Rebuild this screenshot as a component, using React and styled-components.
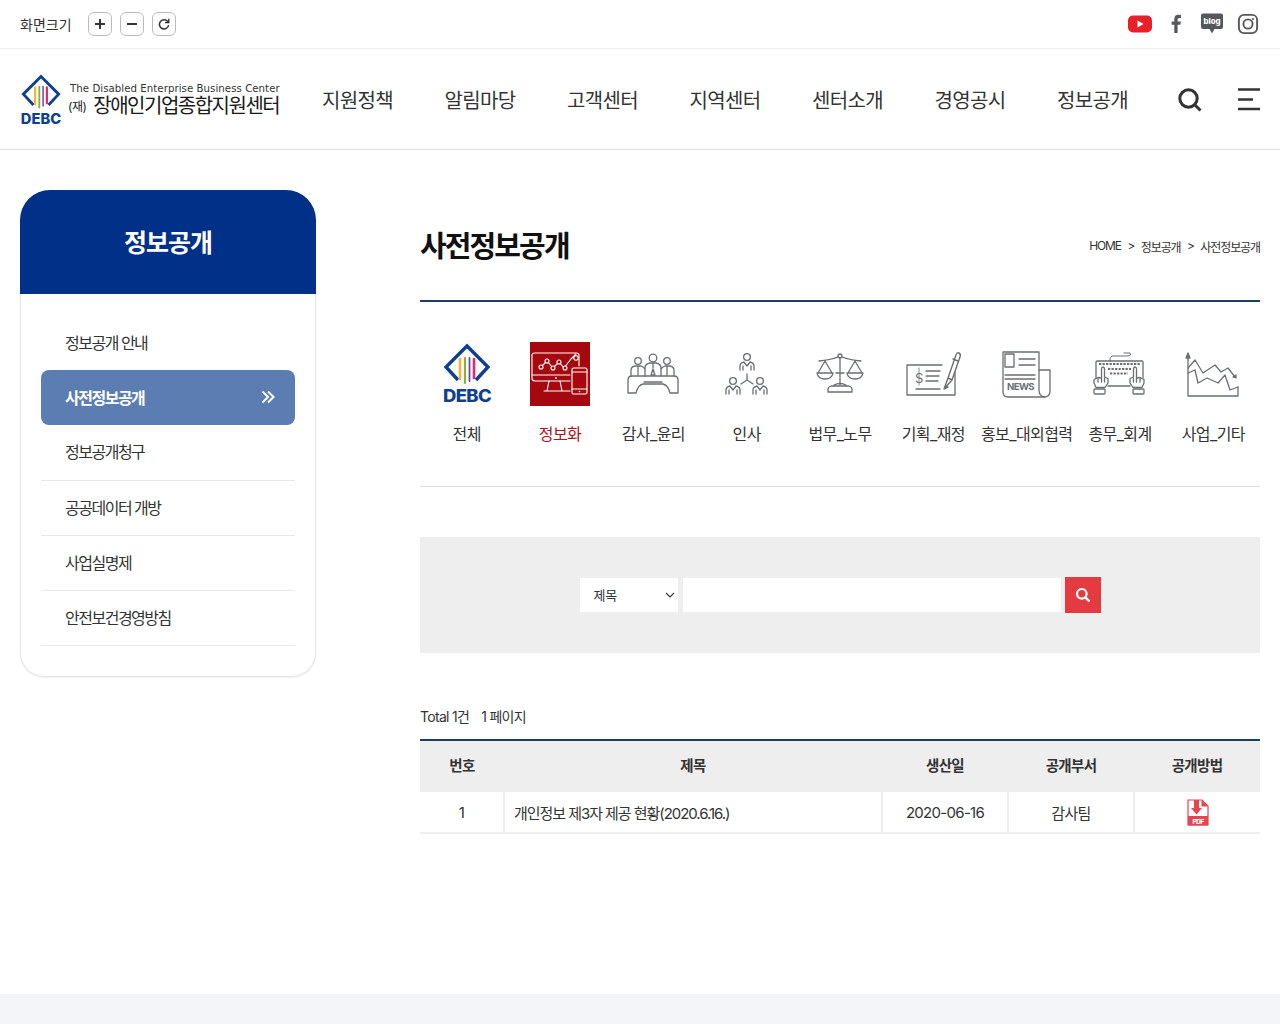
import React from "react";
import styled, { createGlobalStyle } from "styled-components";

const Global = createGlobalStyle`
  * { box-sizing: border-box; }
  html, body { margin: 0; padding: 0; background: #fff; }
  body { font-family: Inter, "Noto Sans CJK KR", sans-serif; color: #333; }
`;
const Page = styled.div`width: 1280px; min-height: 1024px; display: flex; flex-direction: column;`;
const TopBar = styled.div`height: 49px; border-bottom: 1px solid #f0f0f0; display: flex; align-items: center; justify-content: space-between; padding: 0 20px;`;
const ZoomGroup = styled.div`display: flex; align-items: center; gap: 8px;`;
const ZoomLabel = styled.span`font-size: 14px; color: #333; margin-right: 8px; letter-spacing: 0;`;
const ZoomBtn = styled.button`width: 24px; height: 24px; padding: 0; border: 1px solid #bbb; border-radius: 6px; background: #fff; display: flex; align-items: center; justify-content: center; color: #333;`;
const Socials = styled.div`display: flex; align-items: center; gap: 12px;`;
const Header = styled.header`height: 101px; border-bottom: 1px solid #ddd; display: flex; align-items: center; padding: 0 20px;`;
const Logo = styled.a`width: 261px; display: flex; align-items: center; flex: none; margin-top: 1px; svg { flex: none; }`;
const LogoText = styled.div`display: flex; flex-direction: column; padding-top: 1px; margin-left: 6px;`;
const LogoEn = styled.span`font-family: "DejaVu Sans", sans-serif; font-size: 10.2px; line-height: 12px; color: #333; letter-spacing: 0.05px; margin-left: 2px; white-space: nowrap;`;
const LogoKo = styled.span`font-size: 20px; line-height: 22px; color: #1a1a1a; letter-spacing: -1.5px; white-space: nowrap;`;
const LogoJae = styled.span`font-size: 12px; letter-spacing: -0.5px; margin-right: 7px; vertical-align: 2px;`;
const Nav = styled.nav`display: flex; justify-content: space-between; width: 807px; margin-left: 41px; padding-top: 3px;`;
const NavItem = styled.a`font-size: 20px; line-height: 28px; color: #333; letter-spacing: -0.65px; white-space: nowrap;`;
const HeaderTools = styled.div`display: flex; align-items: center; margin-left: 50px; gap: 36px; padding-top: 1px;`;
const Main = styled.main`display: flex; align-items: flex-start; padding: 40px 20px 160px;`;
const Side = styled.aside`width: 296px; flex: none;`;
const SideHead = styled.div`height: 104px; background: #003087; border-radius: 30px 30px 0 0; color: #fff; display: flex; align-items: center; justify-content: center; font-size: 25px; font-weight: 700; letter-spacing: -1px; padding-bottom: 2px;`;
const SideBody = styled.ul`list-style: none; margin: 0; padding: 21px 20px 0; height: 383px; border: 1px solid #e4e4e4; border-top: 0; border-radius: 0 0 24px 24px; box-shadow: 0 1px 2px rgba(0,0,0,.06);`;
const SideItem = styled.li`
  height: 55.2px; display: flex; align-items: center; justify-content: space-between; padding: 0 20px 2px 24px;
  font-size: 16px; letter-spacing: -1.5px; white-space: nowrap;
  color: ${p => (p.$active ? "#fff" : "#333")};
  font-weight: ${p => (p.$active ? 700 : 400)};
  background: ${p => (p.$active ? "#5b7db1" : "transparent")};
  border-radius: ${p => (p.$active ? "8px" : "0")};
  border-bottom: ${p => (p.$line ? "1px solid #e9e9e9" : "0")};
`;
const Content = styled.section`width: 840px; margin-left: 104px;`;
const TitleRow = styled.div`height: 112px; border-bottom: 2px solid #1c3f5e; display: flex; align-items: center; justify-content: space-between; padding-top: 3px;`;
const Title = styled.h2`margin: 0; font-size: 29px; line-height: 36px; font-weight: 700; color: #111; letter-spacing: -1.9px;`;
const Crumbs = styled.div`display: flex; gap: 6.5px; font-size: 12px; color: #333; letter-spacing: -1.1px;`;
const CatGrid = styled.ul`list-style: none; margin: 0; padding: 40px 0 0; height: 185px; border-bottom: 1px solid #ddd; display: grid; grid-template-columns: repeat(9, 1fr); align-content: start;`;
const CatItem = styled.li`display: flex; flex-direction: column; align-items: center; font-size: 16px; line-height: 24px; letter-spacing: -0.6px; white-space: nowrap; color: ${p => (p.$active ? "#b01020" : "#333")};`;
const CatIcon = styled.div`width: 60px; height: 64px; margin-bottom: 16px; display: flex; align-items: center; justify-content: center;`;
const SearchPanel = styled.div`margin-top: 50px; height: 116px; background: #eee; display: flex; align-items: center; justify-content: center; gap: 4px;`;
const SelectBox = styled.div`width: 98px; height: 34px; margin-right: 1px; background: #fff; display: flex; align-items: center; justify-content: space-between; padding: 0 2px 1px 14px; font-size: 13px; letter-spacing: -0.3px; color: #333;`;
const SearchInput = styled.input`width: 378px; height: 34px; border: 0; background: #fff; padding: 0 10px; outline: none;`;
const SearchBtn = styled.button`width: 36px; height: 36px; padding: 0; border: 0; background: #e53a3f; display: flex; align-items: center; justify-content: center;`;
const Total = styled.div`margin-top: 54px; height: 20px; display: flex; gap: 12px; font-size: 14px; line-height: 20px; color: #333; letter-spacing: -0.7px;`;
const Table = styled.table`width: 840px; margin-top: 12px; border-collapse: collapse; table-layout: fixed; border-top: 2px solid #1c3f5e; border-bottom: 2px solid #eee;`;
const Th = styled.th`height: 52px; background: #eee; font-size: 14.5px; font-weight: 700; color: #333; letter-spacing: -0.7px; padding: 0 0 4px;`;
const Td = styled.td`height: 41px; padding: 0 ${p => (p.$left ? "9px" : "0")}; font-size: 15px; color: #333; letter-spacing: ${p => (p.$left ? "-1.05px" : "-0.7px")}; text-align: ${p => (p.$left ? "left" : "center")}; border-left: ${p => (p.$first ? "0" : "2px solid #eee")};`;
const PdfWrap = styled.span`display: inline-flex; vertical-align: middle; margin-top: 1px;`;
const Footer = styled.footer`height: 30px; background: #f4f5f9;`;

const Debc = ({ w = 50, h = 62 }) => (
  <svg width={w} height={h} viewBox="0 0 50 62">
    <path d="M16 37 L4 24 L25 3 L46 24 L34 37" fill="none" stroke="#0f3f8f" strokeWidth="3.4" />
    <path d="M18 16 V36" stroke="#f0b73a" strokeWidth="2.6" strokeLinecap="round" />
    <path d="M23 15 V40" stroke="#8fae3c" strokeWidth="2.2" strokeLinecap="round" />
    <path d="M27.5 15 V38" stroke="#6b4aa0" strokeWidth="1.8" strokeLinecap="round" />
    <path d="M32 16 V35" stroke="#e0267f" strokeWidth="2.6" strokeLinecap="round" />
    <text x="25" y="59" textAnchor="middle" textLength="48" lengthAdjust="spacingAndGlyphs" fontFamily="Inter, sans-serif" fontWeight="800" fontSize="17" fill="#0f3f8f">DEBC</text>
  </svg>
);

const g = { fill: "none", stroke: "#6b6f73", strokeWidth: 1.3, strokeLinecap: "round", strokeLinejoin: "round" };

const IconInfo = () => (
  <svg width="60" height="64" viewBox="0 0 60 64">
    <rect width="60" height="64" fill="#a5090f" />
    <g fill="none" stroke="#fff" strokeWidth="1.1" strokeLinecap="round" strokeLinejoin="round">
      <path d="M40 39 H5 Q2 39 2 36 V13 Q2 11 5 11 H46 Q49 11 49 13 V24" />
      <path d="M2 33 H40" />
      <path d="M19 39 L17 49 H32 L30 39 M14 49 H40" />
      <rect x="42" y="26" width="15" height="26" rx="1.5" />
      <path d="M42 30 H57 M42 47 H57" />
      <path d="M11 25 L17 19 L23 26 L29 20 L34 26 L41 17 L46 12" />
      <circle cx="11" cy="25" r="2" fill="#a5090f" /><circle cx="17" cy="19" r="2" fill="#a5090f" /><circle cx="23" cy="26" r="2" fill="#a5090f" /><circle cx="29" cy="20" r="2" fill="#a5090f" /><circle cx="35" cy="26" r="2" fill="#a5090f" /><circle cx="46" cy="16" r="2.2" fill="#a5090f" />
    </g>
    <circle cx="26" cy="36" r="0.9" fill="#fff" /><circle cx="49.5" cy="49.5" r="0.8" fill="#fff" />
  </svg>
);
const IconAudit = () => (
  <svg width="60" height="64" viewBox="0 0 60 64"><g {...g}>
    <circle cx="15" cy="19" r="3.3" /><circle cx="30" cy="16" r="3.8" /><circle cx="44" cy="19" r="3.3" />
    <path d="M8 34 V28 Q8 25 12 24 H18 Q21 25 22 27 M15 25 V33 M38 27 Q39 25 42 24 H47 Q51 25 51 28 V34 M44 25 V33" />
    <path d="M22 34 V26 Q22 22 27 21 H33 Q38 22 38 26 V34 M30 22 V26 M30 27 L28 33 H32 Z" />
    <path d="M5 51 V38 Q5 34 9 34 H51 Q55 34 55 38 V51 H47 Q45 43 40 42 H20 Q15 43 13 51 Z" />
    <path d="M21 40 H39" />
  </g></svg>
);
const Person = ({ x, y }) => (
  <g transform={`translate(${x} ${y})`}>
    <circle cx="0" cy="0" r="3.4" />
    <path d="M-7 13 V9 Q-7 6 -3 5 L0 9 L3 5 Q7 6 7 9 V13 M-4 9 V13 M4 9 V13" />
  </g>
);
const IconHr = () => (
  <svg width="60" height="64" viewBox="0 0 60 64"><g {...g}>
    <Person x={30} y={15} /><Person x={16} y={39} /><Person x={43} y={39} />
    <path d="M30 32 V38 M30 38 L24 42 M30 38 L36 42" />
  </g></svg>
);
const IconLaw = () => (
  <svg width="60" height="64" viewBox="0 0 60 64"><g {...g}>
    <circle cx="30" cy="14" r="2" />
    <path d="M9 19 Q20 18 28 15 M32 15 Q40 18 51 19 M30 16 V43" />
    <path d="M15 19 L8 31 M15 19 L22 31 M7 31 H23 Q22 37 15 37 Q8 37 7 31 Z" />
    <path d="M45 19 L38 31 M45 19 L52 31 M37 31 H53 Q52 37 45 37 Q38 37 37 31 Z" />
    <path d="M26 31 H34 M24 43 Q30 40 36 43 M18 50 V47 Q18 45 21 44 H39 Q42 45 42 47 V50 Z" />
  </g></svg>
);
const IconPlan = () => (
  <svg width="60" height="64" viewBox="0 0 60 64"><g {...g}>
    <path d="M39 23 H4 V53 H52 V30" />
    <path d="M23 29 H37 M23 34 H36 M23 39 H35 M13 47 H37" />
    <path d="M41 47 L45 36 L53 13 Q54 10 56 11 Q58 12 57 15 L49 38 Z M41 47 L45 45 M45 36 L49 38 M50 17 L55 19" strokeWidth="1.4" />
    <text x="12" y="41" fontFamily="Inter, sans-serif" fontSize="13" fill="#6b6f73" stroke="none">S</text>
    <path d="M16 26 V43" strokeWidth="0.8" />
  </g></svg>
);
const IconNews = () => (
  <svg width="60" height="64" viewBox="0 0 60 64"><g {...g}>
    <path d="M42 28 V10 H6 V50 Q6 55 11 55 H48" />
    <path d="M42 28 H53 V49 Q53 55 47 55 Q42 54 42 48 V28" />
    <rect x="8" y="12" width="9" height="13" />
    <path d="M22 17 H38 M22 23 H38 M8 33 H38 M8 37 H38" />
    <text x="10" y="48" textLength="27" lengthAdjust="spacingAndGlyphs" fontFamily="Inter, sans-serif" fontWeight="700" fontSize="9.5" fill="#6b6f73" stroke="none">NEWS</text>
  </g></svg>
);
const Hand = ({ x, flip }) => (
  <g transform={`translate(${x} 0) scale(${flip ? -1 : 1} 1)`}>
    <path d="M11.5 36 V27 Q11.5 25 13 25 Q14.5 25 14.5 27 V35 L18 36.5 V41 L15 45.5 H6 L4 41 V37.5 L8 35.5 L11.5 36" fill="#fff" />
    <rect x="4" y="47" width="11" height="5" rx="1" />
    <path d="M8 36 V40 M11.5 36 V40 M14.5 36 V40" />
  </g>
);
const IconAcc = () => (
  <svg width="60" height="64" viewBox="0 0 60 64">
    <g {...g}>
      <path d="M34 11 H40 Q42 13.5 38 14 H22 Q19 16 20 19" strokeWidth="1" />
      <path d="M6 36 V20 Q6 19 7 19 H52 Q53 19 53 20 V36" />
      <path d="M18 44 H40" />
    </g>
    <g fill="none" stroke="#6b6f73" strokeWidth="2.2" strokeDasharray="2.3 1.2">
      <path d="M9 22 H50" /><path d="M18 27 H41" /><path d="M20 31.5 H38" />
    </g>
    <g {...g}><Hand x={0} /><Hand x={58} flip /></g>
  </svg>
);
const IconEtc = () => (
  <svg width="60" height="64" viewBox="0 0 60 64"><g {...g}>
    <path d="M5 14 V54 H55 V45" />
    <path d="M5 11 L3 16 H7 Z" fill="#6b6f73" />
    <path d="M5 26 L12 18 L20 31 L32 23 L38 30 L45 26 L52 35" />
    <path d="M50 35 L53 36 L53 33 Z" fill="#6b6f73" />
    <path d="M5 31 L12 28 L15 41 L24 36 L35 41 L42 33 L47 48 L55 45" />
  </g></svg>
);

const Youtube = () => (
  <svg width="24" height="18" viewBox="0 0 24 18"><rect width="24" height="17" y="0.5" rx="5" fill="#e8202a" /><path d="M9.5 5.5 L15.5 9 L9.5 12.5 Z" fill="#fff" /></svg>
);
const Facebook = () => (
  <svg width="24" height="20" viewBox="0 0 24 20"><path d="M13.6 19 V10.7 H16.4 L16.8 7.6 H13.6 V5.6 Q13.6 4 15.3 4 H17 V1 Q16 0.8 14.5 0.8 Q10.3 0.8 10.3 5.1 V7.6 H7.6 V10.7 H10.3 V19 Z" fill="#54585c" /></svg>
);
const Blog = () => (
  <svg width="24" height="22" viewBox="0 0 24 22">
    <path d="M3 0.5 H21 Q23 0.5 23 2.5 V14 Q23 16 21 16 H14.5 L12 20.5 L9.5 16 H3 Q1 16 1 14 V2.5 Q1 0.5 3 0.5 Z" fill="#54585c" />
    <text x="12" y="11" textAnchor="middle" fontFamily="Inter, sans-serif" fontWeight="800" fontSize="7.8" fill="#fff">blog</text>
  </svg>
);
const Insta = () => (
  <svg width="24" height="22" viewBox="0 0 24 22"><rect x="2.9" y="1.9" width="18.2" height="18.2" rx="5" fill="none" stroke="#54585c" strokeWidth="1.9" /><circle cx="12" cy="11" r="4.6" fill="none" stroke="#54585c" strokeWidth="1.9" /><circle cx="17" cy="6" r="1.1" fill="#54585c" /></svg>
);
const Pdf = () => (
  <svg width="22" height="27" viewBox="0 0 22 27">
    <path d="M1 1 H15 L21 7 V26 H1 Z" fill="#fff" stroke="#e8434f" strokeWidth="1.2" />
    <path d="M7 1 H12 V9 H15 L9.5 15.5 L4 9 H7 Z" fill="#e8434f" />
    <path d="M14.5 1 L21 7.5 H14.5 Z" fill="#e8434f" />
    <rect x="1" y="17" width="20" height="9.5" fill="#e8434f" />
    <text x="11" y="24.7" textAnchor="middle" fontFamily="Inter, sans-serif" fontWeight="800" fontSize="6.8" fill="#fff">PDF</text>
  </svg>
);

const cats = [
  ["전체", <Debc key="a" />], ["정보화", <IconInfo key="b" />, true], ["감사_윤리", <IconAudit key="c" />],
  ["인사", <IconHr key="d" />], ["법무_노무", <IconLaw key="e" />], ["기획_재정", <IconPlan key="f" />],
  ["홍보_대외협력", <IconNews key="g" />], ["총무_회계", <IconAcc key="h" />], ["사업_기타", <IconEtc key="i" />],
];
const navs = ["지원정책", "알림마당", "고객센터", "지역센터", "센터소개", "경영공시", "정보공개"];

export default function App() {
  return (
    <Page>
      <Global />
      <TopBar>
        <ZoomGroup>
          <ZoomLabel>화면크기</ZoomLabel>
          <ZoomBtn aria-label="확대"><svg width="12" height="12" viewBox="0 0 12 12"><path d="M6 1 V11 M1 6 H11" stroke="#333" strokeWidth="2" /></svg></ZoomBtn>
          <ZoomBtn aria-label="축소"><svg width="12" height="12" viewBox="0 0 12 12"><path d="M1 6 H11" stroke="#333" strokeWidth="2" /></svg></ZoomBtn>
          <ZoomBtn aria-label="초기화"><svg width="12" height="12" viewBox="0 0 12 12"><path d="M10 4 A4.6 4.6 0 1 0 10.6 7" fill="none" stroke="#333" strokeWidth="1.5" /><path d="M10.8 0.8 V4.6 H7" fill="none" stroke="#333" strokeWidth="1.4" /></svg></ZoomBtn>
        </ZoomGroup>
        <Socials><Youtube /><Facebook /><Blog /><Insta /></Socials>
      </TopBar>
      <Header>
        <Logo>
          <Debc w={42} h={54} />
          <LogoText>
            <LogoEn>The Disabled Enterprise Business Center</LogoEn>
            <LogoKo><LogoJae>(재)</LogoJae>장애인기업종합지원센터</LogoKo>
          </LogoText>
        </Logo>
        <Nav>{navs.map(n => <NavItem key={n}>{n}</NavItem>)}</Nav>
        <HeaderTools>
          <svg width="24" height="24" viewBox="0 0 24 24"><circle cx="10.5" cy="10.5" r="8.7" fill="none" stroke="#333" strokeWidth="3" /><path d="M16.5 16.5 L22.5 22.5" stroke="#333" strokeWidth="3" /></svg>
          <svg width="22" height="23" viewBox="0 0 22 23"><path d="M0 1.5 H22 M0 11.5 H15 M0 21 H22" stroke="#333" strokeWidth="2.6" /></svg>
        </HeaderTools>
      </Header>
      <Main>
        <Side>
          <SideHead>정보공개</SideHead>
          <SideBody>
            <SideItem>정보공개 안내</SideItem>
            <SideItem $active>사전정보공개
              <svg width="14" height="14" viewBox="0 0 14 14"><path d="M1.5 1.5 L7 7 L1.5 12.5 M7 1.5 L12.5 7 L7 12.5" fill="none" stroke="#fff" strokeWidth="2" /></svg>
            </SideItem>
            <SideItem $line>정보공개청구</SideItem>
            <SideItem $line>공공데이터 개방</SideItem>
            <SideItem $line>사업실명제</SideItem>
            <SideItem $line>안전보건경영방침</SideItem>
          </SideBody>
        </Side>
        <Content>
          <TitleRow>
            <Title>사전정보공개</Title>
            <Crumbs><span>HOME</span><span>&gt;</span><span>정보공개</span><span>&gt;</span><span>사전정보공개</span></Crumbs>
          </TitleRow>
          <CatGrid>
            {cats.map(([label, icon, active]) => (
              <CatItem key={label} $active={active}><CatIcon>{icon}</CatIcon>{label}</CatItem>
            ))}
          </CatGrid>
          <SearchPanel>
            <SelectBox>제목
              <svg width="12" height="12" viewBox="0 0 12 12"><path d="M2 4 L6 8 L10 4" fill="none" stroke="#333" strokeWidth="1.1" /></svg>
            </SelectBox>
            <SearchInput aria-label="검색어" />
            <SearchBtn aria-label="검색">
              <svg width="16" height="16" viewBox="0 0 16 16"><circle cx="6.8" cy="6.8" r="4.8" fill="none" stroke="#fff" strokeWidth="2.2" /><path d="M10.5 10.5 L14.5 14.5" stroke="#fff" strokeWidth="2.4" /></svg>
            </SearchBtn>
          </SearchPanel>
          <Total><span>Total 1건</span><span>1 페이지</span></Total>
          <Table>
            <colgroup><col width="84" /><col width="378" /><col width="126" /><col width="126" /><col width="126" /></colgroup>
            <thead><tr><Th>번호</Th><Th>제목</Th><Th>생산일</Th><Th>공개부서</Th><Th>공개방법</Th></tr></thead>
            <tbody><tr>
              <Td $first>1</Td>
              <Td $left>개인정보 제3자 제공 현황(2020.6.16.)</Td>
              <Td>2020-06-16</Td>
              <Td>감사팀</Td>
              <Td><PdfWrap><Pdf /></PdfWrap></Td>
            </tr></tbody>
          </Table>
        </Content>
      </Main>
      <Footer />
    </Page>
  );
}
